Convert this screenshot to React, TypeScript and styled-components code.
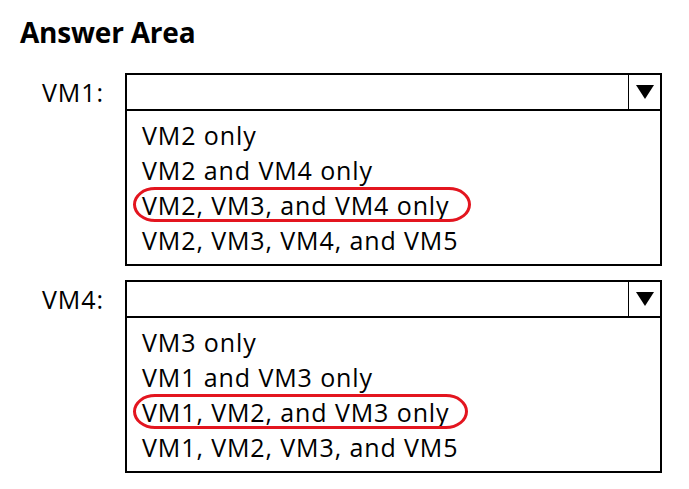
import React from 'react';
import styled, { createGlobalStyle } from 'styled-components';

type Question = {
  label: string;
  options: string[];
  answer: number;
  ringWidth: number;
};

const questions: Question[] = [
  {
    label: 'VM1:',
    options: ['VM2 only', 'VM2 and VM4 only', 'VM2, VM3, and VM4 only', 'VM2, VM3, VM4, and VM5'],
    answer: 2,
    ringWidth: 338,
  },
  {
    label: 'VM4:',
    options: ['VM3 only', 'VM1 and VM3 only', 'VM1, VM2, and VM3 only', 'VM1, VM2, VM3, and VM5'],
    answer: 2,
    ringWidth: 335,
  },
];

const App: React.FC = () => {
  return (
    <>
      <GlobalStyle />
      <Page>
        <Title>Answer Area</Title>
        <Questions>
          {questions.map((q) => (
            <Row key={q.label}>
              <Label>{q.label}</Label>
              <Dropdown>
                <Header>
                  <Field />
                  <ArrowCell>
                    <svg width="18" height="14" viewBox="0 0 18 14">
                      <polygon points="0,0 18,0 9,14" fill="#000" />
                    </svg>
                  </ArrowCell>
                </Header>
                <OptionList>
                  {q.options.map((opt, i) => (
                    <Option key={opt}>
                      {i === q.answer ? <Circled $width={q.ringWidth}>{opt}</Circled> : opt}
                    </Option>
                  ))}
                </OptionList>
              </Dropdown>
            </Row>
          ))}
        </Questions>
      </Page>
    </>
  );
};

const GlobalStyle = createGlobalStyle`
  body {
    margin: 0;
    background: #fff;
    font-family: "Open Sans", "Noto Sans", sans-serif;
    color: #000;
  }
`;

const Page = styled.div`
  width: 689px;
  height: 489px;
  padding: 14px 0 0 20px;
  box-sizing: border-box;
`;

const Title = styled.h1`
  margin: 0;
  font-size: 28px;
  font-weight: 700;
  line-height: 36px;
  letter-spacing: -0.2px;
`;

const Questions = styled.div`
  display: flex;
  flex-direction: column;
  gap: 14px;
  margin-top: 23px;
`;

const Row = styled.div`
  display: grid;
  grid-template-columns: 105px 537px;
  align-items: start;
`;

const Label = styled.div`
  padding-left: 22px;
  font-size: 25px;
  letter-spacing: 0.9px;
  line-height: 38px;
`;

const Dropdown = styled.div`
  border: 2px solid #000;
  display: flex;
  flex-direction: column;
`;

const Header = styled.div`
  display: flex;
  height: 34px;
  border-bottom: 2px solid #000;
`;

const Field = styled.div`
  flex: 1;
`;

const ArrowCell = styled.div`
  width: 31px;
  border-left: 1px solid #000;
  display: flex;
  align-items: center;
  justify-content: center;
`;

const OptionList = styled.div`
  padding: 7px 0 6px 15px;
  display: flex;
  flex-direction: column;
`;

const Option = styled.div`
  font-size: 25px;
  letter-spacing: 0.9px;
  line-height: 35px;
  height: 35px;
  white-space: nowrap;
`;

const Circled = styled.span<{ $width: number }>`
  position: relative;
  display: inline-block;

  &::after {
    content: '';
    position: absolute;
    left: -9px;
    top: -1px;
    width: ${(p) => p.$width}px;
    height: 35px;
    box-sizing: border-box;
    border: 3px solid #e3151f;
    border-radius: 22px / 50%;
  }
`;

export default App;
